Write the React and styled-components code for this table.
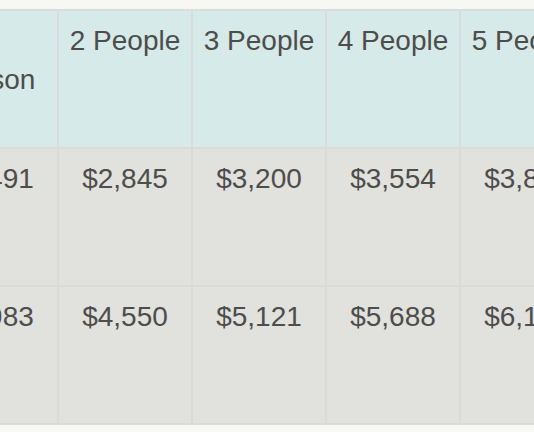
import React from "react";
import styled, { createGlobalStyle } from "styled-components";

const GlobalStyle = createGlobalStyle`
  html, body {
    margin: 0;
    padding: 0;
    background: #f7f7f3;
    overflow: hidden;
  }
  body {
    font-family: "Liberation Sans", Arial, Helvetica, sans-serif;
  }
`;

const Page = styled.div`
  padding: 9px 0 20px;
`;

const Table = styled.table`
  border-collapse: collapse;
  table-layout: fixed;
  width: ${(p) => p.$cols * 134}px;
  margin-left: -77px;
  color: #4d4d4b;
  font-size: 28px;
  line-height: 38.5px;
`;

const Col = styled.col`
  width: 134px;
`;

const HeadCell = styled.th`
  background: #d6eae9;
  border: 2px solid #dadcdb;
  font-weight: normal;
  text-align: center;
  vertical-align: top;
  padding: 11px 10.5px 9px;
  height: 116px;
`;

const BodyCell = styled.td`
  background: #e1e1de;
  border: 2px solid #dadad7;
  text-align: center;
  vertical-align: top;
  padding: 11px 10.5px 9px;
  height: 116px;
`;

const sizes = ["1 Person", "2 People", "3 People", "4 People", "5 People", "6 People", "7 People", "8 People"];
const rows = [
  ["$2,491", "$2,845", "$3,200", "$3,554", "$3,840", "$4,125", "$4,410", "$4,694"],
  ["$3,983", "$4,550", "$5,121", "$5,688", "$6,144", "$6,599", "$7,054", "$7,509"],
];

export default function App() {
  return (
    <Page>
      <GlobalStyle />
      <Table $cols={sizes.length}>
        <colgroup>
          {sizes.map((s) => (
            <Col key={s} />
          ))}
        </colgroup>
        <thead>
          <tr>
            {sizes.map((s) => (
              <HeadCell key={s}>{s}</HeadCell>
            ))}
          </tr>
        </thead>
        <tbody>
          {rows.map((r, i) => (
            <tr key={i}>
              {r.map((v, j) => (
                <BodyCell key={j}>{v}</BodyCell>
              ))}
            </tr>
          ))}
        </tbody>
      </Table>
    </Page>
  );
}
